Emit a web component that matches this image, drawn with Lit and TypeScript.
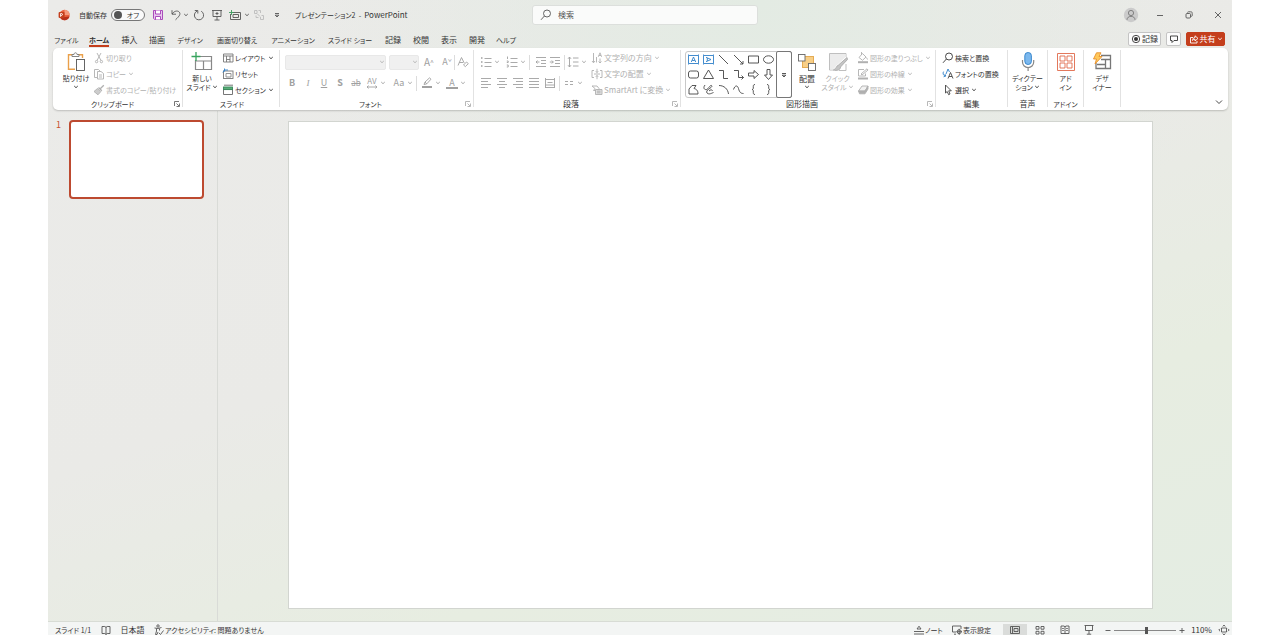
import { LitElement, html, css, svg, nothing, type SVGTemplateResult, type TemplateResult } from "lit";
import { customElement, state } from "lit/decorators.js";
import { classMap } from "lit/directives/class-map.js";

/** Wraps stroke artwork in an svg of the given pixel size. */
const icon = (w: number, h: number, body: SVGTemplateResult) => html`<svg
  class="icon" width=${w} height=${h} viewBox="0 0 ${w} ${h}" fill="none" stroke="currentColor" stroke-width="0.9" aria-hidden="true">${body}</svg>`;

const caret = html`<svg class="icon caret" width="6" height="4" viewBox="0 0 6 4" fill="none" stroke="currentColor" stroke-width="0.9" aria-hidden="true"><path d="M1.2 1 L3 2.7 L4.8 1" /></svg>`;

const lines = (rows: [number, number][]) =>
  icon(12, 12, svg`${rows.map(([a, b], i) => svg`<path d="M${a} ${1.5 + i * 3} H${b}" />`)}`);

const ICONS = {
  logo: icon(12, 12, svg`<circle cx="6.5" cy="6" r="5.2" fill="#e8623f" stroke="none"/><path d="M6.5 .8 A5.2 5.2 0 0 1 11.7 6 H6.5Z" fill="#f59a7c" stroke="none"/><path d="M2 8.5 A5.2 5.2 0 0 0 11.5 7.5Z" fill="#b7301a" stroke="none"/><rect x="0.6" y="3" width="6" height="6" rx="1" fill="#c43e1c" stroke="none"/><path d="M2.6 7.8 V4.5 H3.8 A1 1 0 0 1 3.8 6.4 H2.6" stroke="#fff" stroke-width=".9"/>`),
  save: icon(12, 12, svg`<path d="M1.5 1.5 H10.5 V10.5 H2.7 L1.5 9.3Z" fill="#e9c8ef" stroke="#a33bb5"/><path d="M3.5 1.5 V5 H8.5 V1.5 M3.5 10.5 V7.5 H8.5 V10.5" fill="#fff" stroke="#a33bb5"/>`),
  undo: icon(12, 12, svg`<path d="M2 1.2 V5.2 H6 M2.2 5 C4 2 7.5 1.2 9.2 3 C10.8 5 9.8 6.8 5.5 10.8"/>`),
  redo: icon(12, 12, svg`<path d="M4.2 2 A4.6 4.6 0 1 0 8.2 2.2 M1.8 1.5 H4.8 V4.5"/>`),
  present: icon(12, 12, svg`<path d="M1 1.5 H11 M2 1.5 V7.5 H10 V1.5 M6 7.5 V11 M3.5 11 H8.5 M6 3 V6 M4.5 4.5 H7.5"/>`),
  newSmall: icon(12, 12, svg`<path d="M3.5 3.5 H11.5 V10.5 H1.5 V5 M4 5.5 H9.5 V8.5 H4Z"/><path d="M2.5 1 V6 M0 3.5 H5" stroke="#3b9a5b"/>`),
  group: icon(12, 12, svg`<path d="M1.5 1.5 H4 V4.5 H1.5Z M5.5 1.5 H7.5 V4 M4.5 5 L7 7.5 M8.5 6.5 H10.5 V10.5 H7.5 V8 M3 6.5 V8.5 H5.5"/>`),
  more: icon(8, 8, svg`<path d="M2 2.5 H6 M2.2 4.2 L4 6 L5.8 4.2Z"/>`),
  search: icon(12, 12, svg`<circle cx="7" cy="4.5" r="3.5"/><path d="M4.4 7 L1 10.8"/>`),
  person: icon(16, 16, svg`<circle cx="8" cy="8" r="7.2" fill="#cbcbcb" stroke="none"/><circle cx="8" cy="6" r="2.6" stroke="#777"/><path d="M4 12.8 C4 8.2 12 8.2 12 12.8" stroke="#777"/>`),
  min: icon(12, 12, svg`<path d="M3 6.5 H9"/>`),
  restore: icon(12, 12, svg`<rect x="3" y="4.5" width="4.5" height="4.5" rx="1"/><path d="M4.5 3.5 C4.7 2.8 5 2.8 6 2.8 H7.5 C9 2.8 9.2 3.2 9.2 4.5 V6 C9.2 7 9 7.3 8.4 7.6"/>`),
  close: icon(12, 12, svg`<path d="M3 3 L9 9 M9 3 L3 9"/>`),
  record: icon(10, 10, svg`<circle cx="5" cy="5" r="3.7"/><circle cx="5" cy="5" r="2" fill="currentColor" stroke="none"/>`),
  comment: icon(10, 10, svg`<path d="M1.5 2 H8.5 V6.5 H5 L3 8.5 V6.5 H1.5Z"/>`),
  share: icon(10, 10, svg`<path d="M4 3.5 H1.5 V9 H8 V7 M3.5 6.5 C3.8 4.5 4.5 3.6 6 3.6 V1.8 L9 4.4 L6 7 V5.2 C5 5.2 4.2 5.6 3.5 6.5Z"/>`),
  paste: icon(20, 22, svg`<path d="M6 3.8 H2.5 V18.2 H9 M13 3.8 H16.5 V7" stroke="#eaa04a" stroke-width="1.4"/><path d="M6 5.5 V3.5 H8 C8 1.2 11 1.2 11 3.5 H13 V5.5Z" fill="#fff" stroke="#777"/><rect x="10.5" y="8.5" width="8" height="11" fill="#fff" stroke="#555"/>`),
  cut: icon(12, 12, svg`<path d="M4 1 L8 8.5 M8 1 L4 8.5"/><circle cx="3.6" cy="9.6" r="1.2"/><circle cx="8.4" cy="9.6" r="1.2"/>`),
  copy: icon(12, 12, svg`<path d="M4 9.5 H1.5 V1.5 H5.5 L7 3"/><path d="M4.5 3.5 H8 L10.5 5.5 V11 H4.5Z M6 7 H9 M6 9 H9"/>`),
  brush: icon(12, 12, svg`<path d="M10.8 1.2 L7.5 4.5 M5.5 3.5 L8.8 6.8" stroke-width="1.3"/><path d="M4.6 4.4 L7.8 7.6 L5 10.8 L1 7.5Z" fill="#ccc"/>`),
  newSlide: icon(22, 20, svg`<path d="M8 4.5 H20.5 V17.5 H4.5 V8 M4.5 9 H20.5 M12.5 9 V17.5" stroke="#888" stroke-width="1.2"/><path d="M5 0 V9 M.5 4.5 H9.5" stroke="#37a35d" stroke-width="1.3"/>`),
  layout: icon(12, 12, svg`<path d="M1.5 2 H11 V10 H1.5Z M1.5 4 H11 M4.5 4 V10 M8 4 V10 M4.5 7.5 H8" stroke="#777"/>`),
  reset: icon(12, 12, svg`<rect x="1.5" y="3" width="9.5" height="7.5" stroke="#777"/><path d="M4 5.5 H9 V9 H4Z" stroke="#888"/><path d="M.8 4.4 L2.5 2 H6 M2.5 .5 V3.5" stroke="#2f80c8"/>`),
  section: icon(12, 12, svg`<path d="M1.5 5.5 H10.5 V10.5 H1.5Z M2 1.2 H11" stroke="#666"/><rect x="1.5" y="3" width="9" height="2.6" fill="#5aae78" stroke="#37885a"/>`),
  clear: icon(12, 12, svg`<path d="M1 9.5 L4.5 1.5 L7.2 7 M2.2 6.5 H6"/><path d="M6.5 9 L9.5 6 L11.3 7.6 L8.4 10.6Z"/>`),
  pen: icon(12, 12, svg`<path d="M3 7.5 L4 5 L8.5 .9 L10 2.2 L5.8 6.8Z M4 5 L5.8 6.8"/><path d="M1 10 H11" stroke-width="2"/>`),
  spaced: icon(12, 12, svg`<path d="M1 10 H11 M2.6 8.6 L1 10 L2.6 11.4 M9.4 8.6 L11 10 L9.4 11.4"/>`),
  bullets: icon(12, 12, svg`<path d="M1 2 H2.5 M1 6 H2.5 M1 10 H2.5" stroke-width="1.5"/><path d="M4.5 2.5 H11.5 M4.5 6.5 H11.5 M4.5 10.5 H11.5"/>`),
  numbers: icon(12, 12, svg`<path d="M1.5 .5 V3 M.8 5 H2.2 V6.5 H.8 M.8 9 H2.2 V11 H.8 M4.5 2.5 H11.5 M4.5 6.5 H11.5 M4.5 10.5 H11.5"/>`),
  outdent: icon(12, 12, svg`<path d="M1 1.5 H11 M6 4.5 H11 M6 7.5 H11 M1 10.5 H11 M4.5 6 H1 M2.5 4.5 L1 6 L2.5 7.5"/>`),
  indent: icon(12, 12, svg`<path d="M1 1.5 H11 M6 4.5 H11 M6 7.5 H11 M1 10.5 H11 M.8 6 H4.3 M2.8 4.5 L4.3 6 L2.8 7.5"/>`),
  spacing: icon(12, 12, svg`<path d="M2.5 1 V11 M1 2.8 L2.5 1 L4 2.8 M1 9.2 L2.5 11 L4 9.2 M6 2 H11.5 M6 6 H11.5 M6 10 H11.5"/>`),
  left: lines([[1, 11], [1, 8], [1, 11], [1, 8]]),
  center: lines([[1, 11], [3, 9], [1, 11], [3, 9]]),
  right: lines([[1, 11], [4, 11], [1, 11], [4, 11]]),
  justify: lines([[1, 11], [1, 11], [1, 11], [1, 11]]),
  distribute: icon(12, 12, svg`<path d="M1.5 1 V11 M10.5 1 V11 M1.5 2.5 H10.5 M3.5 5.5 H8.5 M1.5 8 H10.5 M1.5 10.5 H10.5"/>`),
  columns: icon(12, 12, svg`<path d="M2 4.5 H5 M7 4.5 H10 M2 7.5 H5 M7 7.5 H10"/>`),
  direction: icon(12, 12, svg`<path d="M2.5 1 V10.5 M1 9 L2.5 10.8 L4 9 M5.5 10.5 V5 M7.3 4.8 L9 .8 L10.6 4.8 M7.8 3.5 H10 M9 6.5 V11 M7.6 9.5 L9 11 L10.4 9.5"/>`),
  valign: icon(12, 12, svg`<path d="M3 2.5 H1 V9.5 H3 M9 2.5 H11 V9.5 H9 M3 6 H9 M6 .8 V4.5 M4.8 3.2 L6 4.6 L7.2 3.2 M6 11.2 V7.5 M4.8 8.8 L6 7.4 L7.2 8.8"/>`),
  smart: icon(12, 12, svg`<path d="M1 2 H6 L8 4.5 L6 6.5 H2.5 L4 4.5Z"/><path d="M4.5 5.5 H11 V10.5 H4.5Z M6 7.2 H9.5 M6 8.8 H9.5" fill="#e0e0e0"/>`),
  arrange: icon(20, 20, svg`<rect x="5.5" y="4.5" width="11" height="11" fill="#f8cf87" stroke="#e2a548"/><rect x="1.5" y="2.5" width="6.5" height="6.5" fill="#fff" stroke="#666"/><rect x="11.5" y="11.5" width="7" height="7" fill="#fff" stroke="#666"/>`),
  quick: icon(20, 20, svg`<path d="M18 12 V18.5 H11 M6 18 H1.5 V1.5 H18 V5" fill="none" stroke="#b8b8b8"/><path d="M2 2 H17.6 V5 L8 14 L5 17.6 H2Z" fill="#ececec" stroke="none"/><path d="M19 5.5 L10.5 13 C8.5 13.5 8.5 16.5 5.5 18 C9 19 12.5 18 12.5 15 L19.5 7.5Z" fill="#c4c4c4" stroke="#aaa"/>`),
  fill: icon(12, 12, svg`<path d="M2 5.5 L5.5 1.5 L9 5 L5.5 8.3Z M9.5 5.5 L10.5 7.5 M4.5 0 V3"/><path d="M1 10.2 H11" stroke-width="2"/>`),
  outline: icon(12, 12, svg`<path d="M7 1.5 H1.5 V8 H8.5 V5.5 M4 6 L10 .8 L11 2 L5 7Z"/><path d="M1 10.5 H11" stroke-width="2"/>`),
  effect: icon(12, 12, svg`<path d="M1.5 7 L5 2 H11 L8 7Z" fill="#f2f2f2"/><path d="M1.5 7 L2.5 9.8 H8 L11 5 V2 L8 7Z" fill="currentColor"/>`),
  replaceFont: icon(12, 12, svg`<path d="M6 10.5 L8.5 4.5 L11 10.5 M7 8.5 H10" stroke="#444"/><path d="M3.5 8 A2.8 2.8 0 0 1 1.6 3.6 M1.6 8.8 L3.8 8 L2.8 6 M4 6 L6 1 L7.5 4" stroke="#2f80c8"/>`),
  select: icon(12, 12, svg`<path d="M3.5 1 L9.3 6.8 H6.7 L8 10 L6.6 10.7 L5.2 7.5 L3.5 9Z" stroke="#444"/>`),
  mic: icon(16, 22, svg`<rect x="4.8" y="1.5" width="6.6" height="12" rx="3.2" fill="#7bb8ee" stroke="#2f80c8"/><path d="M2.5 9 V11 A5.6 5.6 0 0 0 13.7 11 V9 M8.1 16.5 V20" stroke="#888" stroke-width="1.2"/>`),
  addin: icon(20, 20, svg`<path d="M1.5 1.5 H18.5 V18.5 H1.5Z M4 4 H9 V9 H4Z M11 4 H16 V9 H11Z M4 11 H9 V16 H4Z M11 11 H16 V16 H11Z" stroke="#e0694a"/>`),
  designer: icon(20, 20, svg`<path d="M9 3.5 H18.5 V16.5 H4 V11 M9 7.5 H18.5 M5 12.5 H13.5 M13.5 7.5 V16.5" stroke="#777" stroke-width="1.3"/><path d="M4.5 .8 H9 L7 4.5 H10 L3 12 L4.5 7 H1.5Z" fill="#ffc95c" stroke="#e8902a"/>`),
  launcher: icon(6, 6, svg`<path d="M.5 5 V.5 H5 M2.5 2.5 L5 5 M5.5 2.5 V5.5 H2.5"/>`),
  book: icon(12, 12, svg`<path d="M6 3 V10.5 M4.8 2.5 H2 V9.5 H4.8 L6 10.5 L7.2 9.5 H10 V2.5 H7.2 L6 3.3Z"/>`),
  access: icon(12, 12, svg`<circle cx="5" cy="2" r="1.2"/><path d="M1.5 4 L5 4.5 L8.5 3.5 M3.5 4.5 V7 L2.5 10.5 H4 L5 8 M6.5 4.5 V6.5"/><path d="M6 9 L7.5 10.5 L10.5 6.5"/>`),
  notes: icon(12, 12, svg`<path d="M4 5 L6 2.2 L8 5Z M1 7.5 H11 M1 10 H11"/>`),
  display: icon(12, 12, svg`<path d="M5 8 H1.5 V2 H10 V5 M3 10.2 H5"/><circle cx="8.2" cy="7.7" r="2"/><path d="M8.2 4.8 V10.8 M5.4 7.7 H11"/>`),
  normal: icon(12, 12, svg`<path d="M1.5 2.5 H10.5 V9.5 H1.5Z M3.5 2.5 V9.5 M5 4.5 H9 V7.5 H5Z"/>`),
  sorter: icon(12, 12, svg`<path d="M2 2.5 H5 V5.2 H2Z M7 2.5 H10 V5.2 H7Z M2 7.3 H5 V10 H2Z M7 7.3 H10 V10 H7Z"/>`),
  reading: icon(12, 12, svg`<path d="M6 2.5 V10 M2 2 H5 L6 2.8 L7 2 H10 V9.5 H2Z M3.2 4.5 H4.8 M3.2 6.5 H4.8 M7.2 4.5 H8.8 M7.2 6.5 H8.8"/>`),
  show: icon(12, 12, svg`<path d="M1.5 1.5 H10.5 M2.5 1.5 V6.5 H9.5 V1.5 M6 6.5 V10 M3.8 10.2 H8.2"/>`),
  fit: icon(12, 12, svg`<path d="M3.5 4 H8.5 V8 H3.5Z M4.8 2.5 L6 1 L7.2 2.5 M4.8 9.5 L6 11 L7.2 9.5 M2 4.8 L.8 6 L2 7.2 M10 4.8 L11.2 6 L10 7.2"/>`),
  minus: icon(8, 8, svg`<path d="M1.5 4.5 H6.5"/>`),
  plus: icon(8, 8, svg`<path d="M1.5 4.5 H6.5 M4 2 V7"/>`),
  chevron: icon(10, 8, svg`<path d="M2 2.5 L5 5.5 L8 2.5"/>`),
};

const SHAPES: [string, SVGTemplateResult][] = [
  ["テキスト ボックス", svg`<path d="M1.5 2.5 H11.5 V10.5 H1.5Z" stroke="#2f80c8"/><path d="M4.3 9 L6.5 4 L8.7 9 M5.2 7.5 H7.8 M1 2 h1 M11 2 h1 M1 11 h1 M11 11 h1" stroke="#2f80c8"/>`],
  ["縦書きテキスト", svg`<path d="M1.5 2.5 H11.5 V10.5 H1.5Z" stroke="#2f80c8"/><path d="M4 4.3 L9 6.5 L4 8.7 M5.3 5 V8 M1 2 h1 M11 2 h1 M1 11 h1 M11 11 h1" stroke="#2f80c8"/>`],
  ["直線", svg`<path d="M2 2 L11 11"/>`],
  ["矢印", svg`<path d="M2 2 L11 11 M11 8 V11 H8"/>`],
  ["長方形", svg`<path d="M1.5 3 H11.5 V10 H1.5Z"/>`],
  ["楕円", svg`<ellipse cx="6.5" cy="6.5" rx="5" ry="3.7"/>`],
  ["角丸四角形", svg`<rect x="1.5" y="3" width="10" height="7" rx="2"/>`],
  ["三角形", svg`<path d="M6.5 2 L11.5 10.5 H1.5Z"/>`],
  ["カギ線", svg`<path d="M2 2.5 H6.5 V10.5 H11"/>`],
  ["カギ線矢印", svg`<path d="M2 2.5 H6.5 V9.5 H11.5 M9.5 7.5 L11.5 9.5 L9.5 11.5"/>`],
  ["右矢印", svg`<path d="M1.5 5 H7 V2.5 L11.5 6.5 L7 10.5 V8 H1.5Z"/>`],
  ["下矢印", svg`<path d="M5 1.5 H8 V7 H10.5 L6.5 11.5 L2.5 7 H5Z"/>`],
  ["フリーフォーム", svg`<path d="M2 11 V6 L5 2.5 H9 L7 5.5 C9 6 11 7 11 11Z"/>`],
  ["フリーハンド", svg`<path d="M3 2 C0 6 4 8 6 5.5 C8 3 9 1.5 10 3 C10 5 3 7 5 10 C7 12 10 10 11.5 9.5 M7 8 C9 6 11 7 10 8"/>`],
  ["円弧", svg`<path d="M2 2.5 C7 2.5 11 6 11.5 11"/>`],
  ["曲線", svg`<path d="M1.5 6.5 C3 2 5.5 2 6.5 5.5 C7.5 9.5 9 10.5 11.5 10.5"/>`],
  ["左中かっこ", svg`<path d="M8 1.5 C6 1.5 6.3 3 6.3 5 C6.3 6 5.8 6.5 5 6.5 C5.8 6.5 6.3 7 6.3 8 C6.3 10 6 11.5 8 11.5"/>`],
  ["右中かっこ", svg`<path d="M5 1.5 C7 1.5 6.7 3 6.7 5 C6.7 6 7.2 6.5 8 6.5 C7.2 6.5 6.7 7 6.7 8 C6.7 10 7 11.5 5 11.5"/>`],
];

const TABS = ["ファイル", "ホーム", "挿入", "描画", "デザイン", "画面切り替え", "アニメーション", "スライド ショー", "記録", "校閲", "表示", "開発", "ヘルプ"];

@customElement("app-root")
export class AppRoot extends LitElement {
  @state() private tab = 1;
  @state() private view = 0;

  static styles = css`
    :host { display: block; height: 100vh; background: #fff; color: #333; overflow: hidden;
      font: 400 7px/10px "Noto Sans CJK JP", sans-serif; font-feature-settings: "palt"; }
    * { box-sizing: border-box; }
    button, input { font: inherit; font-feature-settings: inherit; color: inherit; background: none; border: 0; padding: 0; margin: 0; }
    button { display: inline-flex; align-items: center; justify-content: center; white-space: nowrap; }
    .icon { display: block; flex: none; }
    .kanji { font-size: 8px; }
    .window { height: 100%; margin: 0 48px; display: flex; flex-direction: column;
      background: radial-gradient(ellipse at 60% 0%, #e3ebe3 0%, transparent 45%), linear-gradient(160deg, #ebebe9 0%, #eaeae7 45%, #e7ede1 72%, #e4ede3 100%); }

    .title { height: 30px; flex: none; padding-left: 10px; display: grid; grid-template-columns: 1fr 226px 1fr; align-items: center; }
    .title .icon { color: #555; }
    .quick { display: grid; grid-template-columns: 14px 39px 34px 25px 11px 9px 18px 18px 17px 7px 18px 18px 9px 1fr; align-items: center; white-space: nowrap; }
    .quick .autosave { text-align: right; padding-right: 4px; }
    .toggle { height: 12px; border: 1px solid #777; border-radius: 6px; background: #fafafa; justify-content: space-between; padding: 0 5px 0 2px; }
    .knob { width: 8px; height: 8px; border-radius: 50%; background: #555; }
    .name { grid-column: 14; white-space: pre; }
    .title .dim .icon { color: #bbb; }
    .search { height: 20px; display: flex; align-items: center; gap: 6px; padding: 0 7px; background: #fafbfa; border: 1px solid #dcdfdc; border-radius: 3px; color: #555; font-size: 8px; }
    .search input { flex: 1; min-width: 0; outline: 0; }
    .search input::placeholder { color: #555; opacity: 1; }
    .caption { display: flex; justify-content: flex-end; }
    .caption button { width: 29px; height: 20px; }

    .tabs { height: 18px; flex: none; display: flex; justify-content: space-between; padding: 0 7px 0 3px; }
    .tablist { display: grid; grid-template-columns: 31px 34px 27px 28px 38px 56px 56px 58px 28px 28px 28px 28px 30px; }
    .tab span { border-bottom: 2px solid transparent; padding: 4px 0 0; }
    .tab.on { font-weight: 700; }
    .tab.on span { border-color: #c43e1c; }
    .actions { display: flex; gap: 5px; align-items: center; }
    .actions button { height: 14px; border: 1px solid #c4c4c4; border-radius: 2px; background: #fcfcfc; gap: 1px; font-size: 8px; }
    .actions .rec { width: 33px; }
    .actions .com { width: 15px; }
    .actions .share { width: 39px; background: #c43e1c; border-color: #c43e1c; color: #fff; }

    .ribbon { height: 62px; flex: none; margin: 0 4px 1px 5px; display: flex; background: #fff; border-radius: 5px; box-shadow: 0 1px 2px #0003; padding-top: 2px; position: relative; }
    .group { display: grid; grid-template-rows: 48px 11px; position: relative; flex: none; border-right: 1px solid #e2e2e2; height: 57px; }
    .body { display: flex; }
    .label { text-align: center; padding-top: 1px; white-space: nowrap; }
    .label.shift { padding-right: 16px; }
    .launch { position: absolute; right: 2px; bottom: 0; color: #666; }
    .off, .off button { color: #b0b0b0; }
    .g-clip { width: 130px; padding-left: 6px; }
    .g-slide { width: 97px; padding-left: 2px; }
    .g-font { width: 194px; padding-left: 4px; }
    .g-para { width: 207px; padding-left: 4px; }
    .g-draw { width: 255px; padding-left: 4px; }
    .g-edit { width: 72px; padding-left: 6px; }
    .g-edit .label { padding-right: 6px; }
    .g-voice { width: 40px; }
    .g-addin { width: 36px; }
    .g-design { width: 37px; }
    .big { width: 34px; flex-direction: column; justify-content: flex-start; padding-top: 2px; line-height: 9px; }
    .big .icon:first-child { margin-bottom: 2px; }
    .art { height: 22px; display: flex; align-items: center; justify-content: center; }
    .big .row { display: flex; align-items: center; gap: 1px; height: 9px; }
    .list { display: grid; grid-template-rows: repeat(3, 16px); justify-items: start; align-content: start; }
    .list button { gap: 1px; }
    .list .caret { margin-left: 1px; }
    .slide-list { margin-left: 3px; }
    .para-list, .draw-list { margin-left: 4px; }
    .fill { flex: 1; }
    .bars { display: grid; grid-template-rows: 24px 18px; align-content: start; }
    .bar { display: grid; align-items: center; justify-items: start; }
    .tool { width: 16px; height: 16px; }
    .tool.wide { width: 22px; justify-content: flex-start; }
    .wide .face { width: 16px; }
    .face { display: flex; justify-content: center; font-size: 9px; }
    .off .tool { color: #a0a0a0; }
    .f1 { grid-template-columns: 104px 32px 18px 14px 2px 16px; padding-left: 1px; }
    .f2 { grid-template-columns: repeat(5, 16px) 27px 22px 6px 25px 22px; }
    .p1 { grid-template-columns: 26px 22px 7px 14px 16px 2px 22px; }
    .p2 { grid-template-columns: repeat(5, 16px) 3px 22px; }
    .sep { width: 1px; height: 15px; background: #dcdcdc; justify-self: center; }
    .combo { width: 30px; height: 15px; border: 1px solid #e8e8e8; border-radius: 2px; background: #f0f0f0; justify-content: flex-end; }
    .combo.name-box { width: 101px; }
    .b { font-weight: 700; } .i { font-style: italic; font-family: "Liberation Serif", serif; } .u { text-decoration: underline; } .s { text-decoration: line-through; font-size: 8px; }
    .stack { display: grid; place-items: center; }
    .stack > * { grid-area: 1 / 1; }
    .stack b { font-size: 8px; font-weight: 400; padding-bottom: 5px; }
    .under { border-bottom: 2px solid; line-height: 9px; padding: 0 3px; }
    .grow { font-size: 10px; }
    .mark { font-size: 7px; align-self: flex-start; }
    .gallery { display: grid; grid-template-columns: repeat(6, 15px) 15px; grid-template-rows: repeat(3, 15px); border: 1px solid #c8c8c8; border-radius: 3px; height: 47px; width: 107px; margin-top: 1px; color: #444; }
    .gallery .expand { grid-column: 7; grid-row: 1 / 4; border: 1px solid #777; border-radius: 2px; height: 47px; margin: -1px -1px 0 0; }
    .w30 { width: 30px; } .w31 { width: 31px; }
    .collapse { position: absolute; right: 4px; bottom: 4px; }

    .main { flex: 1; min-height: 0; display: grid; grid-template-columns: 170px 1fr; border-bottom: 1px solid #d8dcd5; }
    .thumbs { border-right: 1px solid #d9dbd7; padding: 9px 13px 0 8px; display: grid; grid-template-columns: 12px 1fr; align-content: start; }
    .thumbs .num { color: #c8502f; font-size: 9px; line-height: 10px; }
    .thumb { height: 79px; border: 2px solid #bd4a30; border-radius: 4px; background: #fff; margin-left: 1px; }
    .stage { padding: 10px 79px 12px 70px; display: grid; }
    .slide { background: #fff; border: 1px solid #d2d5d0; }

    .status { height: 13px; flex: none; background: #f3f5f4; display: flex; justify-content: space-between; padding: 2px 1px 0 7px; white-space: nowrap; }
    .st-left { display: flex; align-items: center; height: 12px; }
    .st-left .book { width: 31px; }
    .st-left .lang { width: 23px; margin-right: 9px; }
    .st-left .count { width: 35px; line-height: 12px; }
    .st-right { display: grid; grid-template-columns: 38px 52px 24px 25px 25px 24px 13px 62px 11px 29px 15px; align-items: center; height: 12px; }
    .st-right button { height: 12px; }
    .st-right .on { background: #dadcda; }
    .st-right .start { justify-content: flex-start; }
    .status .icon { color: #555; }
    .zoom { appearance: none; width: 62px; height: 12px; background: linear-gradient(#888, #888) center / 100% 1px no-repeat; }
    .zoom::-webkit-slider-thumb { appearance: none; width: 3px; height: 7px; background: #555; }
  `;

  private small(art: TemplateResult, text: string, opts: { drop?: boolean; off?: boolean } = {}) {
    return html`<button class=${classMap({ off: !!opts.off })} ?disabled=${!!opts.off}>${art}<span>${text}</span>${opts.drop ? caret : nothing}</button>`;
  }

  private tool(label: string, face: unknown, cls = "", drop = false) {
    return html`<button disabled aria-label=${label} class=${drop ? "tool wide" : "tool"}><span class="face ${cls}">${face}</span>${drop ? caret : nothing}</button>`;
  }

  private launcher(label: string, off = false) {
    return html`<button class=${classMap({ launch: true, off })} ?disabled=${off} aria-label="${label}の詳細">${ICONS.launcher}</button>`;
  }

  private titleBar() {
    return html`<header class="title">
      <div class="quick">
        ${ICONS.logo}<span class="autosave" id="autosave">自動保存</span>
        <button class="toggle" role="switch" aria-checked="false" aria-labelledby="autosave"><i class="knob"></i>オフ</button>
        <button aria-label="保存">${ICONS.save}</button>
        <button aria-label="元に戻す">${ICONS.undo}</button><button aria-label="元に戻す一覧">${caret}</button>
        <button aria-label="やり直し">${ICONS.redo}</button>
        <button aria-label="最初から">${ICONS.present}</button>
        <button aria-label="新しいスライド">${ICONS.newSmall}</button><button aria-label="スライド一覧">${caret}</button>
        <button class="dim" disabled aria-label="グループ化">${ICONS.group}</button>
        <button aria-label="カスタマイズ">${ICONS.more}</button>
        <span class="name">プレゼンテーション2  -  <span class="kanji">PowerPoint</span></span>
      </div>
      <label class="search">${ICONS.search}<input type="text" placeholder="検索" aria-label="検索" /></label>
      <div class="caption">
        <button aria-label="アカウント">${ICONS.person}</button><button aria-label="最小化">${ICONS.min}</button>
        <button aria-label="元のサイズ">${ICONS.restore}</button><button aria-label="閉じる">${ICONS.close}</button>
      </div>
    </header>`;
  }

  private tabRow() {
    return html`<nav class="tabs">
      <div class="tablist" role="tablist">
        ${TABS.map((t, i) => html`<button role="tab" aria-selected=${i === this.tab} class=${classMap({ tab: true, on: i === this.tab, kanji: t.length === 2 })} @click=${() => (this.tab = i)}><span>${t}</span></button>`)}
      </div>
      <div class="actions">
        <button class="rec">${ICONS.record}記録</button>
        <button class="com" aria-label="コメント">${ICONS.comment}</button>
        <button class="share">${ICONS.share}共有${caret}</button>
      </div>
    </nav>`;
  }

  private ribbon() {
    const off = { off: true };
    const offDrop = { off: true, drop: true };
    return html`<section class="ribbon" aria-label="リボン">
      <div class="group g-clip">
        <div class="body">
          <button class="big"><span class="art">${ICONS.paste}</span><span class="row">貼り付け</span><span class="row">${caret}</span></button>
          <div class="list">${this.small(ICONS.cut, "切り取り", off)}${this.small(ICONS.copy, "コピー", offDrop)}${this.small(ICONS.brush, "書式のコピー/貼り付け", off)}</div>
        </div>
        <div class="label shift">クリップボード</div>${this.launcher("クリップボード")}
      </div>
      <div class="group g-slide">
        <div class="body">
          <button class="big"><span class="art">${ICONS.newSlide}</span><span class="row">新しい</span><span class="row">スライド${caret}</span></button>
          <div class="list slide-list">${this.small(ICONS.layout, "レイアウト", { drop: true })}${this.small(ICONS.reset, "リセット")}${this.small(ICONS.section, "セクション", { drop: true })}</div>
        </div>
        <div class="label">スライド</div>
      </div>
      <div class="group g-font">
        <div class="bars off">
          <div class="bar f1">
            <button class="combo name-box" disabled aria-label="フォント">${caret}</button>
            <button class="combo" disabled aria-label="フォント サイズ">${caret}</button>
            ${this.tool("拡大", html`A<span class="mark">^</span>`, "grow")}${this.tool("縮小", html`A<span class="mark">ˇ</span>`)}
            <i class="sep"></i>${this.tool("書式のクリア", ICONS.clear)}
          </div>
          <div class="bar f2">
            ${this.tool("太字", "B", "b")}${this.tool("斜体", "I", "i")}${this.tool("下線", "U", "u")}${this.tool("影", "S", "b")}${this.tool("取り消し線", "ab", "s")}
            ${this.tool("文字の間隔", html`<span class="stack"><b>AV</b>${ICONS.spaced}</span>`, "", true)}${this.tool("文字種の変換", "Aa", "", true)}<i class="sep"></i>
            ${this.tool("蛍光ペン", ICONS.pen, "", true)}${this.tool("フォントの色", html`<span class="under">A</span>`, "", true)}
          </div>
        </div>
        <div class="label shift">フォント</div>${this.launcher("フォント", true)}
      </div>
      <div class="group g-para">
        <div class="body off">
          <div class="bars">
            <div class="bar p1">
              ${this.tool("箇条書き", ICONS.bullets, "", true)}${this.tool("段落番号", ICONS.numbers, "", true)}<i class="sep"></i>
              ${this.tool("インデントを減らす", ICONS.outdent)}${this.tool("インデントを増やす", ICONS.indent)}<i class="sep"></i>
              ${this.tool("行間", ICONS.spacing, "", true)}
            </div>
            <div class="bar p2">
              ${this.tool("左揃え", ICONS.left)}${this.tool("中央揃え", ICONS.center)}${this.tool("右揃え", ICONS.right)}${this.tool("両端揃え", ICONS.justify)}${this.tool("均等割り付け", ICONS.distribute)}
              <i class="sep"></i>${this.tool("段組み", ICONS.columns, "", true)}
            </div>
          </div>
          <div class="list para-list kanji">${this.small(ICONS.direction, "文字列の方向", offDrop)}${this.small(ICONS.valign, "文字の配置", offDrop)}${this.small(ICONS.smart, "SmartArt に変換", offDrop)}</div>
        </div>
        <div class="label shift kanji">段落</div>${this.launcher("段落", true)}
      </div>
      <div class="group g-draw">
        <div class="body">
          <div class="gallery">
            ${SHAPES.map(([n, s]) => html`<button aria-label=${n}>${icon(13, 13, s)}</button>`)}
            <button class="expand" aria-label="図形一覧">${ICONS.more}</button>
          </div>
          <button class="big w30"><span class="art">${ICONS.arrange}</span><span class="row kanji">配置</span><span class="row">${caret}</span></button>
          <button class="big w31 off" disabled><span class="art">${ICONS.quick}</span><span class="row">クイック</span><span class="row">スタイル${caret}</span></button>
          <div class="list draw-list">${this.small(ICONS.fill, "図形の塗りつぶし", offDrop)}${this.small(ICONS.outline, "図形の枠線", offDrop)}${this.small(ICONS.effect, "図形の効果", offDrop)}</div>
        </div>
        <div class="label shift kanji">図形描画</div>${this.launcher("図形描画", true)}
      </div>
      <div class="group g-edit">
        <div class="body"><div class="list">${this.small(ICONS.search, "検索と置換")}${this.small(ICONS.replaceFont, "フォントの置換")}${this.small(ICONS.select, "選択", { drop: true })}</div></div>
        <div class="label kanji">編集</div>
      </div>
      <div class="group g-voice">
        <div class="body"><button class="big fill"><span class="art">${ICONS.mic}</span><span class="row">ディクテー</span><span class="row">ション${caret}</span></button></div>
        <div class="label kanji">音声</div>
      </div>
      <div class="group g-addin">
        <div class="body"><button class="big fill"><span class="art">${ICONS.addin}</span><span class="row">アド</span><span class="row">イン</span></button></div>
        <div class="label">アドイン</div>
      </div>
      <div class="group g-design">
        <div class="body"><button class="big fill"><span class="art">${ICONS.designer}</span><span class="row">デザ</span><span class="row">イナー</span></button></div>
      </div>
      <button class="collapse" aria-label="リボンを折りたたむ">${ICONS.chevron}</button>
    </section>`;
  }

  private statusBar() {
    const views: [string, TemplateResult][] = [["標準", ICONS.normal], ["スライド一覧", ICONS.sorter], ["閲覧表示", ICONS.reading], ["スライド ショー", ICONS.show]];
    return html`<footer class="status">
      <div class="st-left">
        <span class="count">スライド 1/1</span><button class="book" aria-label="スペル チェック">${ICONS.book}</button>
        <button class="lang kanji">日本語</button><button>${ICONS.access}アクセシビリティ: 問題ありません</button>
      </div>
      <div class="st-right">
        <button class="start">${ICONS.notes}ノート</button><button class="start">${ICONS.display}表示設定</button>
        ${views.map(([n, a], i) => html`<button aria-label=${n} class=${classMap({ on: this.view === i })} @click=${() => (this.view = i)}>${a}</button>`)}
        <button aria-label="縮小">${ICONS.minus}</button>
        <input class="zoom" type="range" min="10" max="200" value="110" aria-label="ズーム" />
        <button aria-label="拡大">${ICONS.plus}</button><button class="kanji">110%</button><button aria-label="ウィンドウに合わせる">${ICONS.fit}</button>
      </div>
    </footer>`;
  }

  render() {
    return html`<div class="window">
      ${this.titleBar()}${this.tabRow()}${this.ribbon()}
      <main class="main">
        <aside class="thumbs"><span class="num">1</span><button class="thumb" aria-label="スライド 1"></button></aside>
        <div class="stage"><div class="slide"></div></div>
      </main>
      ${this.statusBar()}
    </div>`;
  }
}
